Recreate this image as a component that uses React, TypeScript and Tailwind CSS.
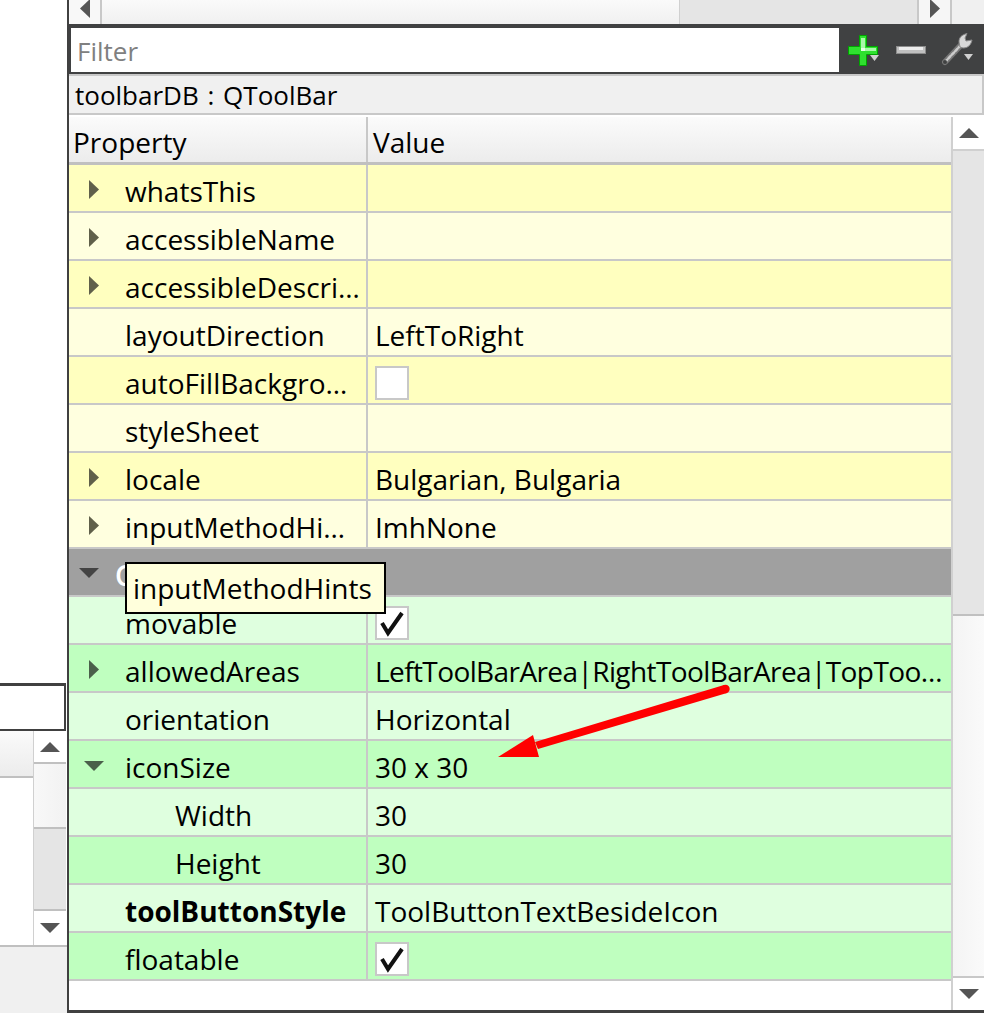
import React from "react";

const font = { fontFamily: '"Open Sans", sans-serif' };

type Row = {
  name: string;
  value?: string;
  arrow?: "right" | "down";
  check?: "on" | "off";
  bold?: boolean;
  child?: boolean;
  tight?: boolean;
};

const yellowRows: Row[] = [
  { name: "whatsThis", arrow: "right" },
  { name: "accessibleName", arrow: "right" },
  { name: "accessibleDescri…", arrow: "right" },
  { name: "layoutDirection", value: "LeftToRight" },
  { name: "autoFillBackgro…", check: "off" },
  { name: "styleSheet" },
  { name: "locale", value: "Bulgarian, Bulgaria", arrow: "right" },
  { name: "inputMethodHi…", value: "ImhNone", arrow: "right" },
];

const greenRows: Row[] = [
  { name: "movable", check: "on" },
  { name: "allowedAreas", value: "LeftToolBarArea|RightToolBarArea|TopToo…", arrow: "right", tight: true },
  { name: "orientation", value: "Horizontal" },
  { name: "iconSize", value: "30 x 30", arrow: "down" },
  { name: "Width", value: "30", child: true },
  { name: "Height", value: "30", child: true },
  { name: "toolButtonStyle", value: "ToolButtonTextBesideIcon", bold: true },
  { name: "floatable", check: "on" },
];

function Tri({ dir, color = "#555555" }: { dir: "left" | "right" | "up" | "down"; color?: string }) {
  if (dir === "left" || dir === "right") {
    return (
      <svg width="10" height="19" viewBox="0 0 10 19">
        <polygon points={dir === "left" ? "10,0 10,19 0,9.5" : "0,0 0,19 10,9.5"} fill={color} />
      </svg>
    );
  }
  return (
    <svg width="20" height="10" viewBox="0 0 20 10">
      <polygon points={dir === "up" ? "0,10 20,10 10,0" : "0,0 20,0 10,10"} fill={color} />
    </svg>
  );
}

function Check({ on }: { on: boolean }) {
  return (
    <div className="w-[34px] h-[34px] mt-[1px] bg-white border-2 border-[#c8c8c8] flex items-center justify-center">
      {on && (
        <svg width="30" height="30" viewBox="0 0 30 30">
          <path d="M5 15 L11 25 L25 5" fill="none" stroke="#111111" strokeWidth="4" />
        </svg>
      )}
    </div>
  );
}

function PropRow({ row, dark, tone }: { row: Row; dark: boolean; tone: "yellow" | "green" }) {
  const bg =
    tone === "yellow" ? (dark ? "bg-[#ffffbf]" : "bg-[#ffffdf]") : dark ? "bg-[#bfffbf]" : "bg-[#dfffdf]";
  const arrowColor = tone === "yellow" ? "#60604a" : "#4a604a";
  return (
    <div className={`flex h-[48px] border-b-2 border-[#c8c8c8] ${bg}`}>
      <div className={`w-[297px] shrink-0 flex items-center pt-[5px] ${row.child ? "pl-[106px]" : "pl-[56px]"} relative ${row.bold ? "font-bold" : ""}`}>
        {row.arrow === "right" && (
          <span className="absolute left-[20px] top-[15px] flex">
            <Tri dir="right" color={arrowColor} />
          </span>
        )}
        {row.arrow === "down" && (
          <span className="absolute left-[15px] top-[20px] flex">
            <Tri dir="down" color={arrowColor} />
          </span>
        )}
        <span className="whitespace-nowrap">{row.name}</span>
      </div>
      <div className="w-[2px] shrink-0 bg-[#c8c8c8]" />
      <div className={`flex-1 flex items-center pt-[5px] pl-[7px] whitespace-nowrap overflow-hidden ${row.tight ? "tracking-[-0.6px]" : ""}`}>
        {row.value}
        {row.check && <Check on={row.check === "on"} />}
      </div>
    </div>
  );
}

function PlusIcon() {
  return (
    <svg width="32" height="31" viewBox="0 0 32 31">
      <path d="M11.5 0.5h7v11h11v8h-11v11h-7v-11h-11v-8h11z" fill="#2fe02f" stroke="#00a400" />
      <path d="M13 3h4v10h11v3H17v-1h-4z" fill="#a8f8a8" />
      <path d="M13 13h4v3h-4z" fill="#e4ffe4" />
      <polygon points="22,20 31,20 26.5,26" fill="#d0d0d0" />
    </svg>
  );
}

function MinusIcon() {
  return (
    <svg width="30" height="8" viewBox="0 0 30 8">
      <rect x="0.5" y="0.5" width="29" height="7" fill="#c0c0c0" stroke="#8c8c8c" />
      <rect x="3" y="1" width="24" height="3" fill="#ececec" />
    </svg>
  );
}

function WrenchIcon() {
  return (
    <svg width="33" height="34" viewBox="0 0 33 34">
      <path d="M4 29 L20 12" stroke="#777777" strokeWidth="6" strokeLinecap="round" />
      <path d="M4 29 L20 12" stroke="#cccccc" strokeWidth="2.5" strokeLinecap="round" strokeDasharray="3 2" />
      <circle cx="4" cy="29" r="2" fill="#404142" />
      <path d="M18 9 C18 5 20 2 26 0.5 L24 5 L25 8 L31 7 C30 12 27 15 22 15 L19 14 Z" fill="#d8d8d8" stroke="#8a8a8a" />
      <polygon points="23,21 32,21 27.5,27" fill="#d0d0d0" />
    </svg>
  );
}

export default function App() {
  return (
    <div className="w-[984px] h-[1013px] flex overflow-hidden bg-white text-[28px] text-black relative" style={font}>
      {/* left dock, cut off by the crop */}
      <div className="w-[67px] shrink-0 flex flex-col">
        <div className="h-[683px]" />
        <div className="h-[48px] w-[66px] border-t-[3px] border-b-[2px] border-r-2 border-[#404040] bg-white" />
        <div className="flex h-[216px] border-b-2 border-[#c0c0c0]">
          <div className="w-[33px] flex flex-col">
            <div className="h-[47px] bg-gradient-to-b from-[#fafafa] to-[#ececec] border-b-2 border-[#c0c0c0]" />
            <div className="flex-1 bg-white" />
          </div>
          <div className="w-[33px] flex flex-col border-l border-[#d0d0d0] bg-white">
            <div className="h-[33px] flex items-center justify-center border-b-2 border-[#c0c0c0]">
              <Tri dir="up" />
            </div>
            <div className="h-[65px] bg-gradient-to-r from-[#f8f8f8] to-[#f2f2f2] border-b-2 border-[#c0c0c0]" />
            <div className="h-[82px] bg-[#e5e5e5] border-b-2 border-[#c0c0c0]" />
            <div className="flex-1 flex items-center justify-center">
              <Tri dir="down" />
            </div>
          </div>
        </div>
        <div className="flex-1 bg-[#f0f0f0]" />
      </div>
      <div className="w-[2px] shrink-0 bg-[#404040]" />

      {/* property editor */}
      <div className="flex-1 flex flex-col min-w-0">
        <div className="h-[24px] flex bg-[#f0f0f0]">
          <div className="w-[33px] flex items-center justify-center bg-[#f8f8f8] border-r-2 border-[#c8c8c8]">
            <span className="flex -mt-[8px]"><Tri dir="left" /></span>
          </div>
          <div className="w-[577px] bg-gradient-to-b from-[#fafafa] to-[#f0f0f0]" />
          <div className="w-[238px] bg-[#e5e5e5] border-l border-[#d0d0d0]" />
          <div className="w-[35px] flex items-center justify-center bg-[#f6f6f6] border-x-2 border-[#c8c8c8]">
            <span className="flex -mt-[8px]"><Tri dir="right" /></span>
          </div>
          <div className="flex-1" />
        </div>
        <div className="h-[50px] bg-[#404142] flex pt-[4px] pb-[2px] pl-[2px]">
          <div className="w-[768px] h-[44px] bg-white text-[#808080] text-[26px] pl-[6px] pt-[2px] flex items-center">Filter</div>
          <div className="flex-1 flex items-start relative">
            <span className="ml-[9px] mt-[7px] flex"><PlusIcon /></span>
            <span className="ml-[16px] mt-[18px] flex"><MinusIcon /></span>
            <span className="ml-[15px] mt-[5px] flex"><WrenchIcon /></span>
          </div>
        </div>
        <div className="h-[41px] mb-[2px] bg-[#f0f0f0] border-y-2 border-r-2 border-[#c8c8c8] pl-[6px] pt-[2px] flex items-center text-[26px] [word-spacing:2px]">
          toolbarDB : QToolBar
        </div>

        <div className="flex-1 flex min-h-0">
          <div className="w-[882px] shrink-0 flex flex-col bg-white">
            <div className="h-[48px] flex bg-gradient-to-b from-[#fbfbfb] to-[#ececec] border-b-[3px] border-[#c0c0c0]">
              <div className="w-[297px] shrink-0 pl-[4px] pt-[5px] flex items-center">Property</div>
              <div className="w-[2px] shrink-0 bg-[#c8c8c8]" />
              <div className="flex-1 pl-[5px] pt-[5px] flex items-center">Value</div>
            </div>
            {yellowRows.map((r, i) => (
              <PropRow key={r.name} row={r} dark={i % 2 === 0} tone="yellow" />
            ))}
            <div className="h-[48px] bg-[#a0a0a0] border-b-2 border-[#c8c8c8] flex items-center relative pl-[46px] pt-[5px] text-white font-semibold">
              <span className="absolute left-[10px] top-[19px] flex">
                <Tri dir="down" color="#444444" />
              </span>
              Cursor
            </div>
            {greenRows.map((r, i) => (
              <PropRow key={r.name} row={r} dark={i % 2 === 1} tone="green" />
            ))}
          </div>
          <div className="flex-1 flex flex-col border-l-2 border-[#d0d0d0] bg-[#f6f6f6]">
            <div className="h-[34px] bg-white flex items-center justify-center border-b-2 border-[#d0d0d0]">
              <Tri dir="up" />
            </div>
            <div className="h-[465px] bg-[#e5e5e5] border-b-2 border-[#c0c0c0]" />
            <div className="flex-1 bg-gradient-to-r from-[#f4f4f4] to-[#fafafa]" />
            <div className="h-[34px] bg-white flex items-center justify-center border-t-2 border-[#c8c8c8]">
              <Tri dir="down" />
            </div>
          </div>
        </div>
        <div className="h-[3px] bg-[#404040]" />
      </div>

      {/* tooltip over the group header */}
      <div className="absolute left-[125px] top-[562px] w-[261px] h-[52px] bg-[#ffffdc] border-2 border-black pl-[6px] flex items-center whitespace-nowrap">
        inputMethodHints
      </div>

      {/* red annotation arrow */}
      <svg className="absolute left-[490px] top-[680px]" width="250" height="90" viewBox="0 0 250 90">
        <polygon points="45,62 234,5 237,13 48,69" fill="#ff0000" />
        <circle cx="235.5" cy="9" r="4.2" fill="#ff0000" />
        <polygon points="8,77 43,55 49,77" fill="#ff0000" />
      </svg>
    </div>
  );
}
